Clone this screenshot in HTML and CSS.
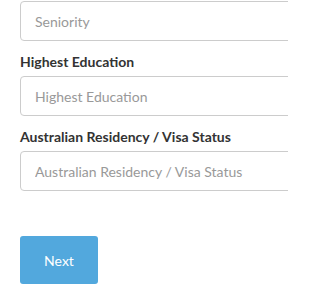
FILE: index.html
```html
<!DOCTYPE html>
<html>
<head>
<meta charset="utf-8">
<link rel="stylesheet" href="styles.css">
</head>
<body>
<div class="page">
  <form class="form">
    <input class="field" type="text" placeholder="Seniority">
    <label class="label">Highest Education</label>
    <input class="field" type="text" placeholder="Highest Education">
    <label class="label">Australian Residency / Visa Status</label>
    <input class="field" type="text" placeholder="Australian Residency / Visa Status">
    <div class="actions">
      <button class="btn" type="button">Next</button>
    </div>
  </form>
</div>
</body>
</html>
```
FILE: styles.css
```css
html, body {
  margin: 0;
  padding: 0;
  background: #fff;
  overflow: hidden;
}
.page {
  width: 288px;
  height: 288px;
  overflow: hidden;
  font-family: Lato, "Open Sans", sans-serif;
}
.form {
  display: flex;
  flex-direction: column;
  align-items: flex-start;
  padding: 1px 0 0 20px;
}
.field {
  box-sizing: border-box;
  width: 300px;
  height: 40px;
  margin: 0 0 12px 0;
  padding: 0 14px;
  border: 1px solid #cccccc;
  border-radius: 4px;
  font-family: Lato, sans-serif;
  font-size: 14px;
  color: #333;
  background: #fff;
  outline: none;
}
.field::placeholder {
  color: #999999;
  opacity: 1;
}
.label {
  display: block;
  font-size: 14px;
  font-weight: 700;
  line-height: 17px;
  color: #333333;
  margin: 0 0 6px 0;
}
.actions {
  margin-top: 33px;
}
.btn {
  width: 78px;
  height: 48px;
  border: none;
  border-radius: 3px;
  background: #52a8dd;
  color: #ffffff;
  font-family: Lato, sans-serif;
  font-size: 14px;
  padding: 0;
  cursor: pointer;
}
```
